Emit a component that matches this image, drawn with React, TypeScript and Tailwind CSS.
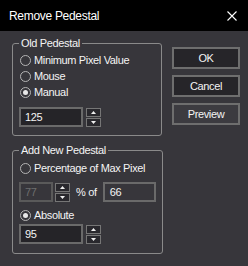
import React from "react";

function Spin() {
  return (
    <div className="flex h-[20px] w-[15px] shrink-0 flex-col justify-center gap-[1px]">
      <div className="flex h-[9px] items-center justify-center border border-[#767676] bg-[#29282d]">
        <svg width="5" height="3" viewBox="0 0 5 3">
          <path d="M2.5 0 L5 3 L0 3 Z" fill="#f0f0f0" />
        </svg>
      </div>
      <div className="flex h-[9px] items-center justify-center border border-[#767676] bg-[#29282d]">
        <svg width="5" height="3" viewBox="0 0 5 3">
          <path d="M0 0 L5 0 L2.5 3 Z" fill="#f0f0f0" />
        </svg>
      </div>
    </div>
  );
}

function Radio({ label, checked }: { label: string; checked?: boolean }) {
  return (
    <div className="ml-[1px] flex h-[16px] items-center gap-[3px]">
      <span className="flex h-[11px] w-[11px] items-center justify-center rounded-full border border-[#b4b4b4]">
        {checked && <span className="h-[5px] w-[5px] rounded-full bg-[#e8e8e8]" />}
      </span>
      <span>{label}</span>
    </div>
  );
}

export default function App() {
  return (
    <div className="flex h-[266px] w-[248px] flex-col bg-[#37363b] font-['Liberation_Sans',Arial,sans-serif] text-[11px] leading-[14px] tracking-[-0.35px] text-[#f4f4f4]">
      <div className="flex h-[31px] shrink-0 items-center justify-between bg-black pl-[9px] pr-[11px]">
        <span className="text-[12px] tracking-[-0.3px] text-white">Remove Pedestal</span>
        <svg width="10" height="10" viewBox="0 0 10 10">
          <path d="M0.5 0.5 L9.5 9.5 M9.5 0.5 L0.5 9.5" stroke="#fff" strokeWidth="1.1" />
        </svg>
      </div>
      <div className="flex pl-[12px] pt-[5px]">
        <div className="flex w-[150px] flex-col gap-[7px]">
          <fieldset className="rounded-[3px] border border-[#8a8a8a] px-[6px] pb-[8px]">
            <legend className="px-[2px]">Old Pedestal</legend>
            <div className="flex flex-col pt-[2px]">
              <Radio label="Minimum Pixel Value" />
              <Radio label="Mouse" />
              <Radio label="Manual" checked />
              <div className="mt-[7px] flex items-center gap-[3px]">
                <div className="flex h-[20px] w-[64px] items-center border-2 border-[#6a6a6a] bg-[#252428] pl-[4px]">125</div>
                <Spin />
              </div>
            </div>
          </fieldset>
          <fieldset className="rounded-[3px] border border-[#8a8a8a] px-[6px] pb-[9px]">
            <legend className="px-[2px]">Add New Pedestal</legend>
            <div className="flex flex-col pt-[3px]">
              <Radio label="Percentage of Max Pixel" />
              <div className="mt-[6px] flex items-center whitespace-nowrap">
                <div className="flex h-[20px] w-[34px] shrink-0 items-center border-2 border-[#5a5a5a] pl-[4px] text-[#6e6e6e]">77</div>
                <div className="ml-[2px] shrink-0">
                  <Spin />
                </div>
                <span className="ml-[6px] shrink-0">% of</span>
                <div className="ml-[6px] flex h-[20px] w-[53px] shrink-0 items-center border-2 border-[#6a6a6a] pl-[5px]">66</div>
              </div>
              <div className="mt-[5px]">
                <Radio label="Absolute" checked />
              </div>
              <div className="mt-[1px] flex items-center gap-[3px]">
                <div className="flex h-[20px] w-[64px] items-center border-2 border-[#6a6a6a] bg-[#252428] pl-[4px]">95</div>
                <Spin />
              </div>
            </div>
          </fieldset>
        </div>
        <div className="ml-[10px] mt-[11px] flex w-[68px] flex-col gap-[6px]">
          <div className="flex h-[22px] items-center justify-center border-2 border-[#6e6e6e] bg-[#262529]">OK</div>
          <div className="flex h-[22px] items-center justify-center border-2 border-[#6e6e6e] bg-[#262529]">Cancel</div>
          <div className="flex h-[22px] items-center justify-center border-2 border-[#6e6e6e] bg-[#3c3b40]">Preview</div>
        </div>
      </div>
    </div>
  );
}
